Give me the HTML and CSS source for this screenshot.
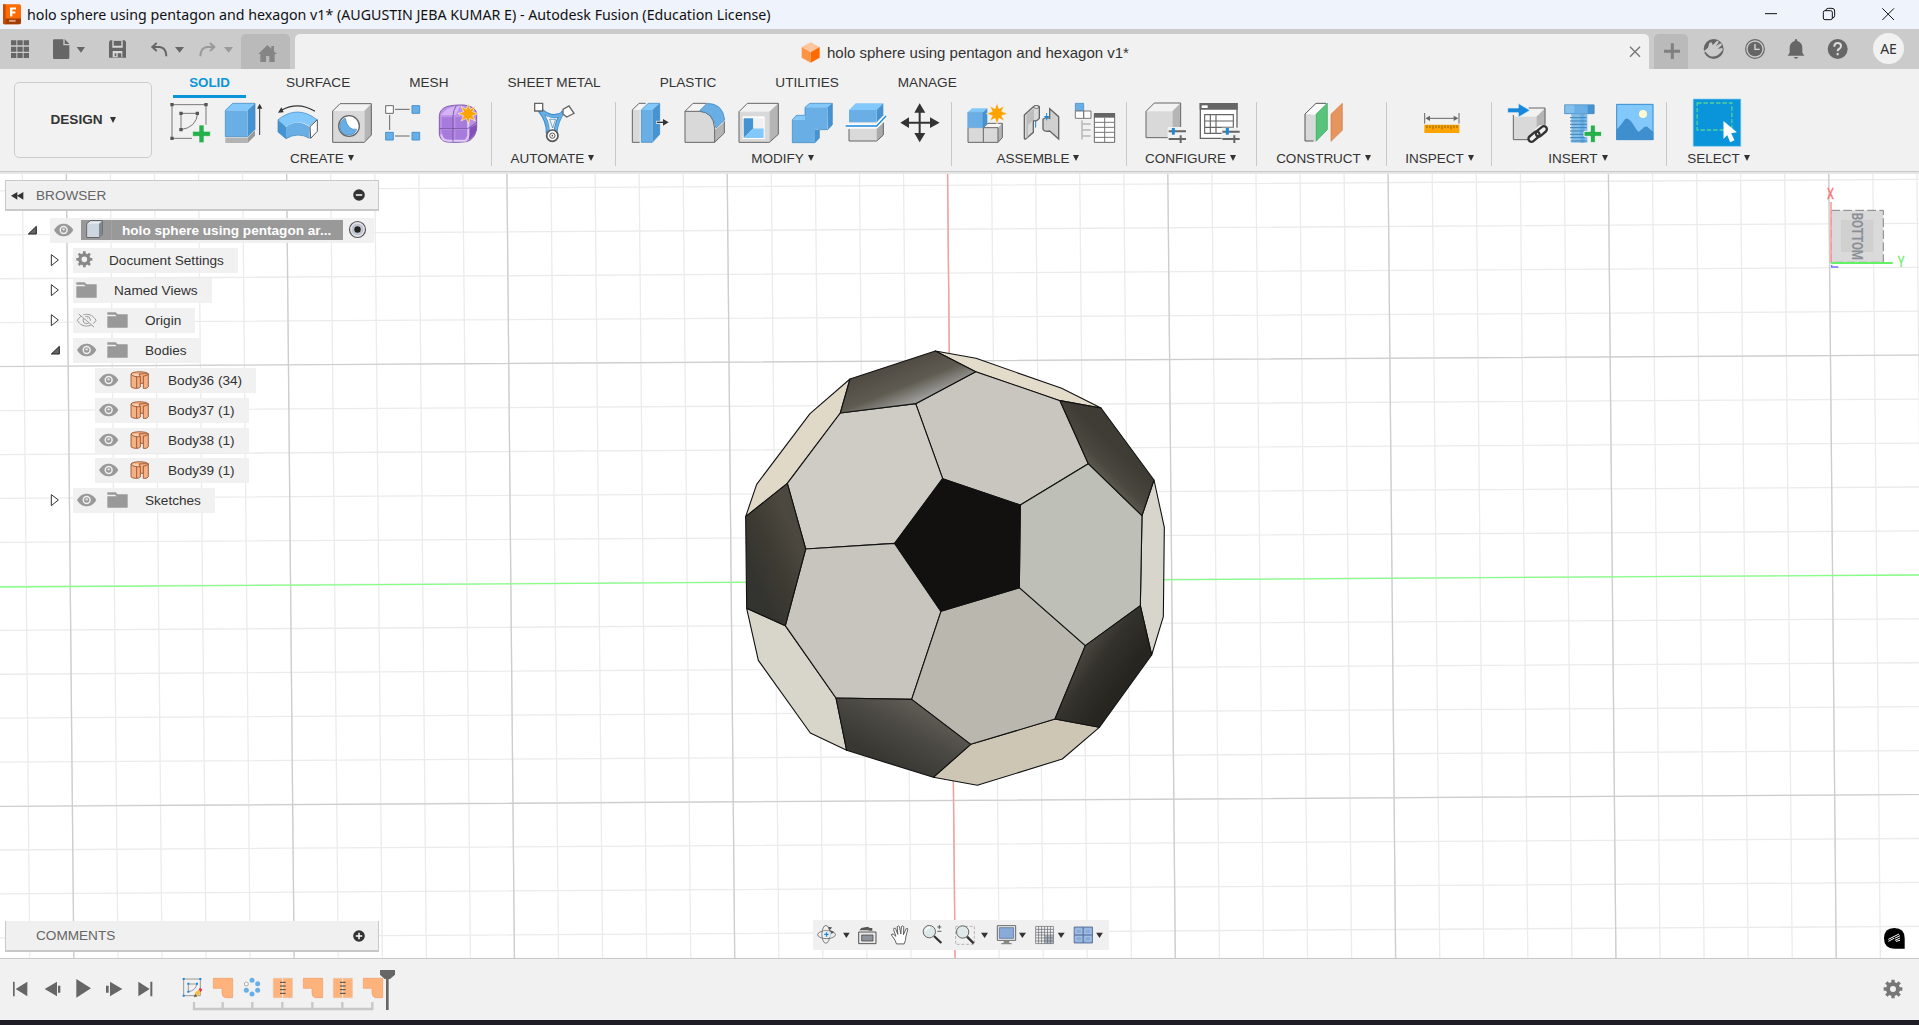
FILE: index.html
```html
<!DOCTYPE html>
<html lang="en">
<head>
<meta charset="utf-8">
<title>holo sphere using pentagon and hexagon v1* - Autodesk Fusion</title>
<link rel="stylesheet" href="styles.css">
</head>
<body>
<svg class="defs" width="0" height="0" aria-hidden="true">
  <symbol id="eye" viewBox="0 0 93 60"><path d="M12 30C22 13 34 11 41 11s20 3 29 19C61 46 49 49 41 49S21 46 12 30z" fill="#999"/><circle cx="41" cy="30" r="12.500" fill="#f0f0f0"/><circle cx="41" cy="30" r="8" fill="#999"/><circle cx="41" cy="28" r="3.500" fill="#e4e4e4"/></symbol>
  <symbol id="eye-off" viewBox="0 0 93 60"><g fill="none" stroke="#999" stroke-width="3"><path d="M13 31C22 17 32 13 41 13s20 4 28 18C60 45 50 48 41 48S21 45 13 31z"/><circle cx="41" cy="30" r="11"/><path d="M36 30a5 5 0 0 1 9-3"/><path d="M19 10L65 50" stroke="#f0f0f0" stroke-width="8"/><path d="M17 12L63 51"/></g></symbol>
  <symbol id="folder" viewBox="0 0 123 60"><path d="M10 7h25l6 6h30v40H10V19h28l-5-5H10z" fill="#999"/></symbol>
  <symbol id="body" viewBox="0 0 126 60"><g stroke="#8f4a26" stroke-width="2.500" stroke-linejoin="round"><path d="M15 12c2-9 50-9 52 0v38c-3 5-10 6-15 5V40h-9v11c-3 3-7 4-10 4-8 0-15-1-18-5z" fill="#f5b083"/><path d="M15 12c6 8 16 9 28 8l-4-8c14-1 20-2 28 0" fill="#fbd0b0"/><path d="M43 20v20M52 18v22M52 18c6 0 12-2 15-6M32 20v34" fill="none"/></g></symbol>
  <symbol id="closed" viewBox="0 0 30 60"><path d="M4 14v33L25 30z" fill="#fff" stroke="#333" stroke-width="3"/></symbol>
  <symbol id="open" viewBox="0 0 30 60"><path d="M4 42L28 19v23z" fill="#666" stroke="#222" stroke-width="3"/></symbol>
</svg>

<header class="titlebar">
  <svg class="app-logo" width="18" height="21" viewBox="9 12 54 62"><rect x="9" y="12" width="54" height="60" rx="5" fill="#ff6b00"/><path d="M9 55h54v12q0 5-5 5H14q-5 0-5-5z" fill="#a33d05"/><path d="M9 12h8v60h-3q-5 0-5-5z" fill="#c94f00"/><path d="M30 22h18v6H37v6h9v6h-9v9h-7z" fill="#fff"/><path d="M27 59h20v6H27z" fill="#e9b795" opacity=".8"/></svg>
  <span class="window-title">holo sphere using pentagon and hexagon v1* (AUGUSTIN JEBA KUMAR E) - Autodesk Fusion (Education License)</span>
  <svg class="win-buttons" width="159" height="29" viewBox="1080 0 477 87"><g fill="none" stroke="#111" stroke-width="3"><path d="M1095 41h36"/><rect x="1270" y="32" width="27" height="27" rx="5"/><path d="M1277 32q1-7 8-7h11q8 0 8 8v13q0 7-7 9"/><path d="M1447 25l35 35M1482 25l-35 35"/></g></svg>
</header>

<nav class="tabbar">
  <div class="quick">
    <svg width="40" height="40" viewBox="0 87 120 120" fill="#666"><path d="M33 121h16v15H33zM52 121h16v15H52zM71 121h16v15H71zM33 140h16v15H33zM52 140h16v15H52zM71 140h16v15H71zM33 159h16v15H33zM52 159h16v15H52zM71 159h16v15H71z"/></svg>
    <svg width="60" height="40" viewBox="120 87 180 120" fill="#666"><path d="M163 118h27v18h18v37q0 4-4 4h-41q-4 0-4-4v-51q0-4 4-4zM194 117l14 15h-14zM230 141h25l-12 17z"/></svg>
    <svg width="40" height="40" viewBox="300 87 120 120"><path d="M331 121h43l4 4v48H327v-48z" fill="#666"/><path d="M337 121h31v22h-31zM338 153h29v19h-29z" fill="#d8d8d8"/><path d="M341 123h23v14h-23zM344 160h5v9h-5zM353 160h11v12h-11z" fill="#666"/></svg>
    <svg width="50" height="40" viewBox="420 87 150 120"><path d="M470 129l-13 12 13 12M458 141h21q20 3 20 28" fill="none" stroke="#666" stroke-width="6"/><path d="M525 141h27l-13 17z" fill="#666"/></svg>
    <svg width="51" height="40" viewBox="570 87 153 120"><path d="M630 129l13 12-13 12M642 141h-21q-20 3-20 28" fill="none" stroke="#999" stroke-width="6"/><path d="M672 141h27l-13 17z" fill="#999"/></svg>
  </div>
  <div class="home-tab"><svg width="49" height="35" viewBox="723 102 147 105" fill="#858585"><path d="M775 162l27-27 12 11v-8h8v16l9 8h-7v24h-43v-24zM798 186h10v-18h-10z" fill-rule="evenodd"/></svg></div>
  <div class="doc-tab">
    <svg class="doc-cube" width="20" height="22" viewBox="64 127 60 66"><path d="M66 142l27-14 27 14-27 16z" fill="#ffc59d"/><path d="M66 142l27 16v31l-27-15z" fill="#ff9345"/><path d="M120 142l-27 16v31l27-15z" fill="#ff6a00"/></svg>
    <span class="doc-name">holo sphere using pentagon and hexagon v1*</span>
    <svg class="tab-close" width="16" height="16" viewBox="681 131 48 48"><path d="M690 139l30 30M720 139l-30 30" stroke="#777" stroke-width="4"/></svg>
  </div>
  <div class="new-tab"><svg width="34" height="35" viewBox="762 102 102 105"><path d="M792 154h48M817 130v47" stroke="#808080" stroke-width="9"/></svg></div>
  <svg class="status-icons" width="164" height="40" viewBox="870 87 492 120"><circle cx="941" cy="147" r="30" fill="#666"/><path d="M915 151l9-8 4-14q7-6 9 2l1 5 12-13q5-2 6 3l-8 13 13-9q6 0 4 6l-12 11 13-3q5 3 1 7-8 14-22 18-14 3-20-5-6-2-10-13z" fill="#cbcbcb"/><path d="M908 158l10-6M958 175l8 10" stroke="#cbcbcb" stroke-width="4"/><g fill="none" stroke="#666"><circle cx="1065" cy="147" r="28" stroke-width="3.500"/></g><circle cx="1065" cy="147" r="22" fill="#666"/><path d="M1065 132v16h14" fill="none" stroke="#ddd" stroke-width="4"/><path d="M1188 117q4 0 4 6 15 4 15 22v13l6 9h-50l6-9v-13q0-18 15-22 0-6 4-6zM1181 171h14q-7 10-14 0z" fill="#666"/><circle cx="1313" cy="147" r="30" fill="#666"/><path d="M1303 140q0-11 10-11t10 9q0 6-6 9-4 2-4 7M1313 159v7" fill="none" stroke="#ddd" stroke-width="6"/></svg>
  <span class="avatar">AE</span>
</nav>

<section class="ribbon">
  <button class="workspace">DESIGN<i class="caret"></i></button>
  <div class="tools">
    <div class="ribbon-tabs"><span class="active">SOLID</span><span>SURFACE</span><span>MESH</span><span>SHEET METAL</span><span>PLASTIC</span><span>UTILITIES</span><span>MANAGE</span></div>
    <div class="groups">
      <div class="group create">
        <div class="icons">
          <svg viewBox="483 300 162 132"><g fill="none" stroke="#777" stroke-width="3"><path d="M519 314h102v60M519 314v101h60M546 388v-48h50q-4 42-50 49"/></g><path d="M514 309h10v10h-10zM616 309h10v10h-10zM514 410h10v10h-10zM541 335h10v10h-10zM590 335h10v10h-10zM541 384h10v10h-10z" fill="#555"/><path d="M600 375h15v19h19v15h-19v19h-15v-19h-19v-15h19z" fill="#24b14b" stroke="#f1f1f1" stroke-width="2"/></svg>
          <svg viewBox="645 300 162 132"><path d="M679 413h67v16h-67z" fill="#b3b3b3"/><path d="M746 413l22-22v16l-22 22z" fill="#999"/><path d="M679 331l22-21h67l-22 21z" fill="#82c8fb"/><path d="M746 331l22-21v78l-22 22z" fill="#4593d0"/><path d="M679 331h67v79h-67z" fill="#69afe5"/><path d="M679 331l22-21h67v78l-22 22h-67z" fill="none" stroke="#3a83bb" stroke-width="2"/><path d="M782 405v-80" stroke="#333" stroke-width="3"/><path d="M782 311l8 15h-16z" fill="#333"/></svg>
          <svg viewBox="807 300 162 132"><path d="M848 330q50-27 100 4" fill="none" stroke="#333" stroke-width="3.500"/><path d="M837 338l10-16 7 15z" fill="#333"/><path d="M837 359q58-46 117 0l-22 20q-35-25-73 2z" fill="#82c8fb"/><path d="M837 359l24 22v35l-24-20z" fill="#4593d0"/><path d="M861 381q35-27 71 0v34q-36-20-71 1z" fill="#69afe5"/><path d="M837 359q58-46 117 0M837 359v37l24 20q35-21 71-1" fill="none" stroke="#3a83bb" stroke-width="2"/><path d="M933 380l22-21v35l-20 21z" fill="#fff" stroke="#555" stroke-width="3"/></svg>
          <svg viewBox="969 300 162 132"><path d="M1001 333l22-22h94l-21 22z" fill="#f2f2f2"/><path d="M1096 333l21-22v94l-21 22z" fill="#b5b5b5"/><path d="M1001 333h95v94h-95z" fill="#d9d9d9"/><path d="M1001 333l22-22h94v94l-21 22h-95z" fill="none" stroke="#666" stroke-width="3"/><circle cx="1050" cy="378" r="31" fill="#fff" stroke="#666" stroke-width="4"/><path d="M1039 355a26 26 0 1 0 34 33q-28 3-34-33z" fill="#69afe5" stroke="#3a83bb" stroke-width="2"/></svg>
          <svg viewBox="1131 300 162 132"><path d="M1172 345v45M1188 328h44M1188 408h44" stroke="#666" stroke-width="3"/><path d="M1160 317h23v23h-23z" fill="#fff" stroke="#666" stroke-width="3"/><path d="M1239 317h23v23h-23zM1239 397h23v23h-23zM1160 397h23v23h-23z" fill="#69afe5" stroke="#4593d0" stroke-width="3"/></svg>
          <svg viewBox="1293 300 162 132"><path d="M1321 347q2-20 22-27 20-6 53-5 34 5 37 25v44q-4 33-30 41-30 4-60 1-20-4-22-24z" fill="#bb91e6" stroke="#6d4a9d" stroke-width="2.500"/><path d="M1324 346q20-28 60-29l-14 28-24 1z" fill="#d5b4f5"/><path d="M1329 352h34v32h-34zM1369 352h36v32h-36zM1329 390h34v29q-34 3-34-16zM1369 390h36v31h-36z" fill="#a77bdc"/><path d="M1410 385l23-12v18q-10 22-23 28z" fill="#8452b6"/><path d="M1327 403q0 18 20 19h53l8-14v-56" fill="none" stroke="#dfc8f6" stroke-width="6"/><path d="M1322 386h84l26-18M1362 425v-75q0-20 10-33" fill="none" stroke="#6d4a9d" stroke-width="2.500"/><path d="M1408 310l5 18 16-9-8 16 17 6-17 6 8 16-16-8-5 17-6-17-16 8 8-16-17-6 17-6-8-16 16 9z" fill="#fba400" stroke="#f1f1f1" stroke-width="2"/></svg>
        </div>
        <div class="label">CREATE<i class="caret"></i></div>
      </div>
      <div class="group automate">
        <div class="icons">
          <svg viewBox="143 105 162 132"><path d="M180 135q28 35 25 70M252 140q-20 25-24 65M184 134q35 34 72 8" fill="none" stroke="#3f8dca" stroke-width="12"/><path d="M182 136q26 33 24 70M254 140q-22 25-26 65M186 136q34 32 66 8" fill="none" stroke="#69afe5" stroke-width="7"/><path d="M211 163h18l-9 26z" fill="#f1f1f1" stroke="#3a83bb" stroke-width="2"/><path d="M166 115h24v23h-24z" fill="#fff" stroke="#666" stroke-width="4"/><path d="M251 133l18-10 15 22-22 11-11-9z" fill="#fff" stroke="#666" stroke-width="4"/><circle cx="219" cy="212" r="17" fill="#fff" stroke="#555" stroke-width="5"/><circle cx="219" cy="212" r="8" fill="#fff" stroke="#555" stroke-width="3"/><circle cx="219" cy="212" r="2.500" fill="#555"/></svg>
        </div>
        <div class="label">AUTOMATE<i class="caret"></i></div>
      </div>
      <div class="group modify">
        <div class="icons">
          <svg viewBox="427 105 162 132"><path d="M458 135l20-20h21l-19 20v97h-22z" fill="#d9d9d9"/><path d="M458 135l20-20h21l-19 20z" fill="#f5f5f5"/><path d="M480 232h-22v-97l20-20h20" fill="none" stroke="#666" stroke-width="3"/><path d="M485 135l21-20h34l-22 20z" fill="#82c8fb"/><path d="M518 135l22-20v93l-22 24z" fill="#4593d0"/><path d="M485 135h33v97h-33z" fill="#69afe5"/><path d="M485 135l21-20h34v93l-22 24h-33z" fill="none" stroke="#3a83bb" stroke-width="2"/><path d="M529 172h26" stroke="#f1f1f1" stroke-width="9"/><path d="M531 172h24" stroke="#333" stroke-width="4"/><path d="M550 162l17 10-17 10z" fill="#333"/></svg>
          <svg viewBox="589 105 162 132"><path d="M616 139h43q42 2 46 50v43h-89z" fill="#d9d9d9"/><path d="M616 139l24-24h38l-18 24z" fill="#f5f5f5"/><path d="M705 195l29-24v33l-29 28z" fill="#b5b5b5"/><path d="M680 115h-40l-24 24v93h89l29-28v-35M616 139h43q42 2 46 50v43" fill="none" stroke="#666" stroke-width="3"/><path d="M660 137l22-22q48 0 53 50l-26 24q-6-45-49-52z" fill="#69afe5" stroke="#3a83bb" stroke-width="2"/></svg>
          <svg viewBox="751 105 162 132"><path d="M778 140l25-25h93l-27 25z" fill="#f2f2f2"/><path d="M869 140l27-25v93l-27 24z" fill="#b5b5b5"/><path d="M778 140h91v92h-91z" fill="#d9d9d9"/><path d="M778 140l25-25h93v93l-27 24h-91z" fill="none" stroke="#666" stroke-width="3"/><path d="M789 154h66v68h-66z" fill="#fff"/><path d="M792 160h29v30l-29 29z" fill="#4593d0"/><path d="M821 190h31v29h-60z" fill="#82c8fb"/><path d="M821 160h31v30h-31z" fill="#f1f1f1"/></svg>
          <svg viewBox="913 105 162 132"><path d="M938 164l12-13h28v13zM976 127l14-12h68l-15 12z" fill="#82c8fb"/><path d="M1043 127l15-12v64l-14 15z" fill="#4593d0"/><path d="M1006 194h13v25l-13 14z" fill="#4593d0"/><path d="M938 164h38v-37h67v67h-37v39h-68z" fill="#69afe5"/><path d="M938 164l12-13h26v-24l14-12h68v64l-14 15h-25v25l-13 14h-68z" fill="none" stroke="#3a83bb" stroke-width="2"/></svg>
          <svg viewBox="1075 105 162 132"><path d="M1108 135l20-20h83l-20 20z" fill="#82c8fb"/><path d="M1191 135l20-20v36l-20 21z" fill="#4593d0"/><path d="M1108 135h83v37h-83z" fill="#69afe5"/><path d="M1108 192h83v36h-83z" fill="#d9d9d9"/><path d="M1191 192l20-19v37l-20 18z" fill="#aaa"/><path d="M1108 192v36h83l20-18v-37" fill="none" stroke="#666" stroke-width="3"/><path d="M1098 183h93l28-30" fill="none" stroke="#fff" stroke-width="10"/><path d="M1098 183h93l28-30" fill="none" stroke="#1789dc" stroke-width="4"/></svg>
          <svg viewBox="1237 105 162 132"><path d="M1262 173l26-16v13h29v-27h-13l16-28 17 28h-14v27h28v-13l29 16-29 16v-13h-28v28h14l-17 28-16-28h13v-28h-29v13z" fill="#333"/></svg>
        </div>
        <div class="label">MODIFY<i class="caret"></i></div>
      </div>
      <div class="group assemble">
        <div class="icons">
          <svg viewBox="57 105 162 132"><path d="M84 188h46v44H84zM130 188h44v44h-44z" fill="#d9d9d9"/><path d="M130 188l14-13h43l-13 13z" fill="#f5f5f5"/><path d="M174 188l13-13v43l-13 14z" fill="#b5b5b5"/><path d="M84 188v44h90l13-14v-43h-43l-14 13h44M130 188v44M174 188v44" fill="none" stroke="#666" stroke-width="3"/><path d="M83 142l13-12h46l-13 12z" fill="#82c8fb"/><path d="M129 142l13-12v46l-13 12z" fill="#4593d0"/><path d="M83 142h46v46H83z" fill="#69afe5" stroke="#3a83bb" stroke-width="1"/><path d="M171 113l6 18 16-8-8 16 18 7-18 6 8 16-16-8-6 18-6-18-16 8 8-16-18-6 18-7-8-16 16 8z" fill="#fba400" stroke="#f1f1f1" stroke-width="2"/></svg>
          <svg viewBox="219 105 162 132"><path d="M253 150l27-25q8-6 18 0v35q-10 12-18 6v36l-23 20q-4 2-4-4z" fill="#d9d9d9" stroke="#666" stroke-width="4"/><path d="M259 150l23-20v34l-18 16v36l-5 4z" fill="#bdbdbd"/><path d="M329 131l27 24v67l-27-24q-16 4-20-5v-30q8-8 20-3z" fill="#d0d0d0" stroke="#666" stroke-width="4"/><ellipse cx="289" cy="126" rx="8" ry="4" fill="#fff" stroke="#666" stroke-width="3"/><path d="M287 168v20M320 144v22" stroke="#1789dc" stroke-width="3"/><path d="M312 153l8 10 8-10z" fill="#1789dc"/></svg>
          <svg viewBox="381 105 162 132"><path d="M406 115h25v23h-25z" fill="#69afe5" stroke="#3a83bb" stroke-width="2"/><path d="M406 138h25v22h-25zM431 138h22v22h-22z" fill="#fff" stroke="#777" stroke-width="3"/><path d="M426 166v57M428 177h24M428 195h24M428 213h24" fill="none" stroke="#999" stroke-width="3"/><path d="M463 146h61v86h-61z" fill="#fff" stroke="#666" stroke-width="3"/><path d="M462 144h63v14h-63z" fill="#666"/><path d="M463 172h61M463 187h61M463 202h61M463 217h61M494 158v74" stroke="#777" stroke-width="3"/></svg>
        </div>
        <div class="label">ASSEMBLE<i class="caret"></i></div>
      </div>
      <div class="group configure">
        <div class="icons">
          <svg viewBox="595 105 162 132"><path d="M619 139l25-25h79l-25 25z" fill="#f2f2f2"/><path d="M698 139l25-25v80l-25 23z" fill="#b5b5b5"/><path d="M619 139h79v79h-79z" fill="#d9d9d9"/><path d="M690 218h-71v-79l25-25h79v74" fill="none" stroke="#666" stroke-width="3"/><path d="M684 186h60v52h-60z" fill="#f1f1f1"/><path d="M687 199h52M687 222h52M723 211v23" stroke="#666" stroke-width="6"/><path d="M701 189v20" stroke="#1789dc" stroke-width="9"/></svg>
          <svg viewBox="757 105 162 132"><path d="M782 116h110v104H782z" fill="#fff" stroke="#666" stroke-width="4"/><path d="M780 114h114v20H780z" fill="#666"/><path d="M786 121h18v8h-18z" fill="#fff"/><path d="M795 149h86v56h-86zM795 168h86M795 187h86M812 149v56M829 149v56" fill="none" stroke="#666" stroke-width="3.500"/><path d="M846 188h56v50h-56z" fill="#f1f1f1"/><path d="M848 200h52M848 222h52M884 211v23" stroke="#666" stroke-width="6"/><path d="M863 189v20" stroke="#1789dc" stroke-width="9"/></svg>
        </div>
        <div class="label">CONFIGURE<i class="caret"></i></div>
      </div>
      <div class="group construct">
        <div class="icons">
          <svg viewBox="1066 105 162 132"><path d="M1096 147h30v80h-30z" fill="#d9d9d9"/><path d="M1096 147l33-32h33l-34 34z" fill="#fff"/><path d="M1122 228h-26v-81l33-32h30" fill="none" stroke="#555" stroke-width="3"/><path d="M1129 148l34-34v80l-34 35z" fill="#58c47b" stroke="#36a35c" stroke-width="2"/><path d="M1174 148l34-33v81l-34 33z" fill="#e6955f" stroke="#cf7d48" stroke-width="2"/></svg>
        </div>
        <div class="label">CONSTRUCT<i class="caret"></i></div>
      </div>
      <div class="group inspect">
        <div class="icons">
          <svg viewBox="38 300 162 132"><path d="M73 339v32M176 339v32M80 355h90" stroke="#666" stroke-width="3"/><path d="M75 355l14-8v16zM174 355l-14-8v16z" fill="#666"/><path d="M72 374h105v25H72z" fill="#fba400"/><path d="M80 376v8M89 376v8M98 376v12M107 376v8M116 376v8M125 376v12M134 376v8M143 376v8M152 376v12M161 376v8M170 376v8" stroke="#7a5a1c" stroke-width="2.500"/></svg>
        </div>
        <div class="label">INSPECT<i class="caret"></i></div>
      </div>
      <div class="group insert">
        <div class="icons">
          <svg viewBox="296 300 162 132"><path d="M339 350l30-26h66l-27 26z" fill="#f2f2f2"/><path d="M408 350l27-26v70l-27 24z" fill="#b5b5b5"/><path d="M339 350h69v69h-69z" fill="#d9d9d9"/><path d="M339 345v74h48M385 324h49v50" fill="none" stroke="#666" stroke-width="3"/><path d="M322 324h32v-14l35 21-35 21v-14h-32z" fill="#1789dc" stroke="#f1f1f1" stroke-width="2"/><g fill="none" stroke-linecap="round"><path d="M401 411l22-22M401 414l16-16" stroke="#f1f1f1" stroke-width="28"/><rect x="-19" y="-9" width="38" height="18" rx="9" transform="translate(401 410) rotate(-40)" stroke="#333" stroke-width="7"/><rect x="-19" y="-9" width="38" height="18" rx="9" transform="translate(423 394) rotate(-40)" stroke="#333" stroke-width="7"/></g></svg>
          <svg viewBox="458 300 162 132"><path d="M513 342h48v86h-48z" fill="#84bee8"/><path d="M540 342h12v86h-12z" fill="#69afe5"/><path d="M509 353h50M509 363h50M509 373h50M509 383h50M509 393h45M509 403h42M509 413h45M511 423h48" stroke="#3a83bb" stroke-width="3"/><path d="M493 315h88v26h-88z" fill="#69afe5"/><path d="M493 315h29v26h-29z" fill="#84c0ee"/><path d="M562 315h20v26h-20z" fill="#4593d0"/><path d="M493 314h88v27h-88z" fill="none" stroke="#3a83bb" stroke-width="2"/><path d="M570 375h15v19h19v15h-19v19h-15v-19h-19v-15h19z" fill="#24b14b" stroke="#f1f1f1" stroke-width="3"/></svg>
          <svg viewBox="620 300 162 132"><path d="M648 312h111v108H648z" fill="#82c8fb"/><path d="M648 390q15-15 22-27 6-9 11-7 9 0 26 31l8 9 17-15q7-4 12 2l15 13v24H648z" fill="#3f8fce"/><path d="M649 313h109v106H649z" fill="none" stroke="#3f8fce" stroke-width="3"/><circle cx="728" cy="342" r="12" fill="#fffbd0"/></svg>
        </div>
        <div class="label">INSERT<i class="caret"></i></div>
      </div>
      <div class="group select">
        <div class="icons">
          <svg viewBox="871.500 300 162 132"><path d="M881 297h143v142H881z" fill="#0a95da" stroke="#8ecbed" stroke-width="2"/><path d="M893 309h104v81H893z" fill="none" stroke="#57cf9a" stroke-width="4" stroke-dasharray="13 6"/><path d="M972 363l40 34-17 3 10 21-13 6-9-22-11 12z" fill="#fff"/></svg>
        </div>
        <div class="label">SELECT<i class="caret"></i></div>
      </div>
    </div>
  </div>
</section>

<main class="viewport">
  <svg class="scene" viewBox="0 174 1919 784">
    <defs>
      <linearGradient id="d1" gradientUnits="userSpaceOnUse" x1="450" y1="80" x2="500" y2="205"><stop offset="0" stop-color="#4d4942"/><stop offset=".6" stop-color="#5f5b51"/><stop offset="1" stop-color="#9a9a97"/></linearGradient>
      <linearGradient id="d2" gradientUnits="userSpaceOnUse" x1="1080" y1="420" x2="1170" y2="330"><stop offset="0" stop-color="#6c695e"/><stop offset=".5" stop-color="#4a473f"/><stop offset="1" stop-color="#3f3c35"/></linearGradient>
      <linearGradient id="d3" gradientUnits="userSpaceOnUse" x1="1060" y1="920" x2="1190" y2="1010"><stop offset="0" stop-color="#4a4841"/><stop offset=".4" stop-color="#34322c"/><stop offset="1" stop-color="#272520"/></linearGradient>
      <linearGradient id="d4" gradientUnits="userSpaceOnUse" x1="530" y1="1080" x2="440" y2="1250"><stop offset="0" stop-color="#5f5b55"/><stop offset=".4" stop-color="#4c4a45"/><stop offset="1" stop-color="#393732"/></linearGradient>
      <linearGradient id="d5" gradientUnits="userSpaceOnUse" x1="215" y1="630" x2="60" y2="700"><stop offset="0" stop-color="#4c483f"/><stop offset=".5" stop-color="#3e3b33"/><stop offset="1" stop-color="#33332f"/></linearGradient>
    </defs>
    <!-- ground grid: each family of lines is one wide dashed stroke, skewed to the camera roll -->
    <g fill="none">
      <path d="M21.700 566H1960" stroke="#ebebeb" stroke-width="900" stroke-dasharray="1.300 42.760" transform="translate(-1.700 0) skewX(.548)"/>
      <path d="M960 134.800V1000" stroke="#ebebeb" stroke-width="2000" stroke-dasharray="1.300 42.640" transform="translate(0 11.500) skewY(-.343)"/>
      <path d="M65.700 566H1960" stroke="#cdcdcd" stroke-width="900" stroke-dasharray="1.300 219" transform="translate(-1.700 0) skewX(.548)"/>
      <path d="M0 366.500L1919 355M0 806.500L1919 794.500" stroke="#cdcdcd" stroke-width="1.200"/>
      <path d="M947.600 174L955.100 958" stroke="#ff9a9a" stroke-width="1.300"/>
      <path d="M0 587L1919 575" stroke="#85ff85" stroke-width="1.300"/>
    </g>
    <g transform="translate(730 340) scale(.33333)" stroke="#111" stroke-width="3.300" stroke-linejoin="round">
      <path d="M616 33L738 55 995 145 1113 204 990 182 737 95z" fill="#e4dccb"/>
      <path d="M1272 420L1303 562 1300 830 1265 945 1231 797 1236 527z" fill="#d8d6cc"/>
      <path d="M1108 1162L997 1257 742 1336 610 1312 722 1213 975 1137z" fill="#cdc6b5"/>
      <path d="M350 1231L241 1179 85 961 50 805 166 857 318 1074z" fill="#d8d5ca"/>
      <path d="M47 530L80 433 240 221 360 117 331 219 172 430z" fill="#e0d9c8"/>
      <path d="M557 191L737 95 990 182 1075 371 871 495 638 416z" fill="#c9c6bf"/>
      <path d="M331 219L557 191 638 416 494 610 227 627 172 430z" fill="#cfccc5"/>
      <path d="M227 627L494 610 633 814 545 1078 318 1074 166 857z" fill="#c8c5be"/>
      <path d="M633 814L868 743 1066 917 975 1137 722 1213 545 1078z" fill="#bab7af"/>
      <path d="M871 495L1075 371 1236 527 1231 797 1066 917 868 743z" fill="#bebfb7"/>
      <path d="M360 117L616 33 737 95 557 191 331 219z" fill="url(#d1)"/>
      <path d="M990 182L1113 204 1272 420 1236 527 1075 371z" fill="url(#d2)"/>
      <path d="M1231 797L1265 945 1108 1162 975 1137 1066 917z" fill="url(#d3)"/>
      <path d="M318 1074L545 1078 722 1213 610 1312 350 1231z" fill="url(#d4)"/>
      <path d="M47 530L172 430 227 627 166 857 50 805z" fill="url(#d5)"/>
      <path d="M638 416L871 495 868 743 633 814 494 610z" fill="#12110f"/>
    </g>
    <g transform="translate(1780 170) scale(.33333)">
      <path d="M154 121h156v156H154z" fill="#d6d6d6" fill-opacity=".9"/><path d="M183 149h97v97h-97z" fill="#ccc" opacity=".7"/>
      <path d="M154 121h156v156H154z" fill="none" stroke="#858585" stroke-width="3" stroke-dasharray="26 10"/>
      <path d="M153 96v183" stroke="#ff9c9c" stroke-width="5"/><path d="M153 279h185" stroke="#63f263" stroke-width="6"/><path d="M155 285v6h20" fill="none" stroke="#7474ee" stroke-width="4"/>
      <text class="cube-face" transform="translate(216 128) rotate(90)" textLength="142" lengthAdjust="spacingAndGlyphs">BOTTOM</text>
      <text class="axis-x" x="141" y="88" textLength="21" lengthAdjust="spacingAndGlyphs">X</text><text class="axis-y" x="353" y="292" textLength="20" lengthAdjust="spacingAndGlyphs">Y</text>
    </g>
  </svg>

  <aside class="browser">
    <div class="panel-head">
      <svg width="30" height="28" viewBox="20 18 90 84"><path d="M54 51v23L35 62.500zM72 51v23L53 62.500z" fill="#333"/></svg>
      <span>BROWSER</span>
      <svg class="head-dot" width="14" height="14" viewBox="0 0 14 14"><circle cx="7" cy="7" r="5.800" fill="#333"/><path d="M3.800 7h6.400" stroke="#fff" stroke-width="1.500"/></svg>
    </div>
    <ul class="tree">
      <li class="root"><svg class="twisty"><use href="#open"/></svg><span class="pill"><svg class="i-eye"><use href="#eye"/></svg><span class="chosen"><svg width="31" height="20" viewBox="244 135 93 60"><path d="M262 145l10-8h36v41l-10 9h-36z" fill="#e8ecf2" stroke="#444" stroke-width="2.500"/><path d="M298 146l10-8v40l-10 9z" fill="#7f8791"/><path d="M263 146h35v40h-35z" fill="#cdd5df"/><path d="M337 135v60" stroke="#aaa" stroke-width="3"/></svg><b>holo sphere using pentagon ar...</b></span><svg class="radio" width="19" height="20" viewBox="0 0 19 20"><circle cx="9.500" cy="9.500" r="8" fill="#e5e8ee" stroke="#555" stroke-width="1.200"/><circle cx="9.500" cy="9.500" r="6" fill="#bfc5cf"/><circle cx="9.500" cy="9.500" r="3.200" fill="#222"/></svg></span></li>
      <li class="l1"><svg class="twisty"><use href="#closed"/></svg><span class="pill"><svg width="36" height="20" viewBox="0 0 108 60"><g transform="translate(34 28)"><circle r="13.500" fill="none" stroke="#888" stroke-width="10"/><path d="M0-24v10M0 24V14M-24 0h10M24 0H14M-17-17l7 7M17 17l-7-7M-17 17l7-7M17-17l-7 7" stroke="#888" stroke-width="8"/></g></svg>Document Settings</span></li>
      <li class="l1"><svg class="twisty"><use href="#closed"/></svg><span class="pill"><svg class="i-folder"><use href="#folder"/></svg>Named Views</span></li>
      <li class="l1"><svg class="twisty"><use href="#closed"/></svg><span class="pill"><svg class="i-eye"><use href="#eye-off"/></svg><svg class="i-folder"><use href="#folder"/></svg>Origin</span></li>
      <li class="l1"><svg class="twisty"><use href="#open"/></svg><span class="pill"><svg class="i-eye"><use href="#eye"/></svg><svg class="i-folder"><use href="#folder"/></svg>Bodies</span></li>
      <li class="l2"><span class="pill"><svg class="i-eye"><use href="#eye"/></svg><svg class="i-body"><use href="#body"/></svg>Body36 (34)</span></li>
      <li class="l2"><span class="pill"><svg class="i-eye"><use href="#eye"/></svg><svg class="i-body"><use href="#body"/></svg>Body37 (1)</span></li>
      <li class="l2"><span class="pill"><svg class="i-eye"><use href="#eye"/></svg><svg class="i-body"><use href="#body"/></svg>Body38 (1)</span></li>
      <li class="l2"><span class="pill"><svg class="i-eye"><use href="#eye"/></svg><svg class="i-body"><use href="#body"/></svg>Body39 (1)</span></li>
      <li class="l1"><svg class="twisty"><use href="#closed"/></svg><span class="pill"><svg class="i-eye"><use href="#eye"/></svg><svg class="i-folder"><use href="#folder"/></svg>Sketches</span></li>
    </ul>
  </aside>

  <aside class="comments panel-head"><span>COMMENTS</span><svg class="head-dot" width="14" height="14" viewBox="0 0 14 14"><circle cx="7" cy="7" r="5.800" fill="#333"/><path d="M3.800 7h6.400M7 3.800v6.400" stroke="#fff" stroke-width="1.500"/></svg></aside>

  <div class="navbar">
    <svg width="40" height="30" viewBox="39 30 121 90"><g fill="none" stroke="#666" stroke-width="2.500"><ellipse cx="80" cy="74" rx="27" ry="12"/><ellipse cx="78" cy="73" rx="12" ry="27"/></g><path d="M69 64h21v18H69z" fill="#f0f0f0"/><path d="M80 67v13M73 73h13" stroke="#1789dc" stroke-width="4"/><path d="M85 50l12 2-8 9zM90 60l13 6-8 6z" fill="#555"/><path d="M130 68h20l-10 16z" fill="#333"/></svg>
    <svg width="30" height="30" viewBox="160 30 90 90"><path d="M177 66h52v35h-52z" fill="#e8e8e8" stroke="#555" stroke-width="3"/><path d="M186 75h34v18h-34z" fill="#8f949c" stroke="#333" stroke-width="2"/><path d="M179 61l6-7 19-4 8 5-7 6z" fill="#555"/><path d="M205 62h13v-8h-8z" fill="#555"/></svg>
    <svg width="32" height="30" viewBox="248 30 97 90"><path d="M289 102q-3-11-12-22-6-6-2-8 5-1 12 7L280 58q0-6 6-3l7 18-2-23q3-5 7 0l4 22 2-23q5-4 7 1l-1 24 8-18q6-3 5 3l-6 22q1 9-5 21z" fill="#fff" stroke="#555" stroke-width="2.800"/></svg>
    <svg width="34" height="30" viewBox="347 30 100 90"><path d="M403 78l22 21" stroke="#333" stroke-width="7"/><circle cx="389" cy="65" r="18.500" fill="#dfe8e8" stroke="#666" stroke-width="3"/><path d="M378 62q3-9 12-10" stroke="#fff" stroke-width="5" fill="none"/><path d="M413 51h12M419 45v12M413 64h12" stroke="#444" stroke-width="2.500"/></svg>
    <svg width="42" height="30" viewBox="447 30 126 90"><path d="M467 49h56v54h-56z" fill="none" stroke="#999" stroke-width="2" stroke-dasharray="9 5"/><path d="M501 80l20 20" stroke="#333" stroke-width="7"/><circle cx="488" cy="66" r="18.500" fill="#dfe9e8" stroke="#666" stroke-width="3"/><path d="M543 68h21l-10 16z" fill="#333"/></svg>
    <svg width="39" height="30" viewBox="573 30 117 90"><path d="M592 47h55v44h-55z" fill="#eee" stroke="#666" stroke-width="3"/><path d="M598 53h43v32h-43z" fill="#88abd9" stroke="#4a648a" stroke-width="2"/><path d="M611 92h17v7h7v4h-31v-4h7z" fill="#888"/><path d="M657 68h21l-11 16z" fill="#333"/></svg>
    <svg width="39" height="30" viewBox="690 30 118 90"><path d="M707 49h54v52h-54z" fill="#eef0f4"/><path d="M735 76h26v25h-26z" fill="#aab3c0"/><path d="M707 49h54v52h-54zM716 49v52M725 49v52M734 49v52M743 49v52M752 49v52M707 58h54M707 67h54M707 75h54M707 84h54M707 93h54" fill="none" stroke="#666" stroke-width="2"/><path d="M774 68h21l-11 16z" fill="#333"/></svg>
    <svg width="40" height="30" viewBox="808 30 119 90"><path d="M823 51h55v48h-55z" fill="#88abd9" stroke="#52698f" stroke-width="2.500"/><path d="M828 57h18v14h-18zM855 57h18v14h-18zM828 79h18v14h-18zM855 79h18v14h-18z" fill="none" stroke="#bdd0ec" stroke-width="2"/><path d="M850 51v48M823 75h55" stroke="#52698f" stroke-width="2.500"/><path d="M889 68h20l-10 16z" fill="#333"/></svg>
  </div>
  <svg class="assistant" width="21" height="21" viewBox="252 84 63 63"><path d="M283 84q31 0 31 31v31h-31q-31 0-31-31t31-31z" fill="#000"/><path d="M265 118l32-16M265 124l17-9M284 115l16-8M285 121l15-7M288 124l12-3" stroke="#fff" stroke-width="3"/></svg>
</main>

<footer class="timeline">
  <svg width="31" height="61" viewBox="15 162 93 183" fill="#666"><path d="M39 230h5v44h-5zM82 230v44L47 252z"/></svg>
  <svg width="32" height="61" viewBox="108 162 96 183" fill="#666"><path d="M171 230v44l-37-22zM174 242h7v21h-7z"/></svg>
  <svg width="31" height="61" viewBox="204 162 93 183" fill="#666"><path d="M229 222v56l44-28z"/></svg>
  <svg width="31" height="61" viewBox="297 162 93 183" fill="#666"><path d="M330 230v44l37-22zM318 242h8v21h-8z"/></svg>
  <svg width="31" height="61" viewBox="390 162 93 183" fill="#666"><path d="M415 230v44l34-22zM451 230h6v44h-6z"/></svg>
  <svg class="track" width="240" height="61" viewBox="483 162 720 183">
    <path d="M582 291v21h535v-21M668 291v21M757 291v21M847 291v21M937 291v21M1027 291v21" fill="none" stroke="#c8c8c8" stroke-width="7"/>
    <path d="M551 222h50v50h-50zM565 260v-23h25q-2 20-25 23" fill="none" stroke="#999" stroke-width="3"/><path d="M548 219h6v6h-6zM598 219h6v6h-6zM548 269h6v6h-6zM562 233h6v6h-6zM588 233h6v6h-6zM562 257h6v6h-6z" fill="#1789dc"/><path d="M582 276l4-14 10-8 8 8-11 11z" fill="#f7bd48"/><path d="M582 277l3-10 7 7z" fill="#555"/><path d="M596 253l5-5 6 6-5 8z" fill="#e4334a"/>
    <g fill="#ffb37c" stroke="#ef9d66" stroke-width="2"><path id="fillet" d="M640 220h58v58h-22q-10-2-10-14v-14h-26z"/><use href="#fillet" x="270"/><use href="#fillet" x="450"/></g>
    <g fill="#69afe5"><circle cx="756" cy="226" r="7.500"/><circle cx="773" cy="236" r="7.500"/><circle cx="773" cy="256" r="7.500"/><circle cx="756" cy="267" r="7.500"/><circle cx="739" cy="256" r="7.500"/><circle cx="739" cy="237" r="6" fill="#fff" stroke="#aaa" stroke-width="3"/></g>
    <g id="thread"><path d="M820 220h57v58h-57z" fill="#ffb37c" stroke="#efbd98" stroke-width="2"/><path d="M848 220v58" stroke="#f1f1f1" stroke-width="3"/><path d="M840 232h17M840 243h17M840 254h17M840 265h17" stroke="#444" stroke-width="3"/></g><use href="#thread" x="180"/>
    <path d="M1140 195h45v14l-15 13h-4v93h-8v-93h-4l-14-13z" fill="#666"/>
  </svg>
  <svg class="settings" width="24" height="24" viewBox="-36 -36 72 72"><circle r="15" fill="none" stroke="#777" stroke-width="12"/><path d="M0-28v12M0 28V16M-28 0h12M28 0H16M-20-20l9 9M20 20l-9-9M-20 20l9-9M20-20l-9 9" stroke="#777" stroke-width="10"/></svg>
</footer>
<div class="taskbar-edge"></div>
</body>
</html>
```

FILE: styles.css
```css
* { box-sizing: border-box; }
body {
  margin: 0;
  height: 1025px;
  overflow: hidden;
  display: flex;
  flex-direction: column;
  background: #f1f1f1;
  color: #333;
  font: 13.33px "Liberation Sans", Arial, sans-serif;
}
svg { display: block; flex: none; }
.defs { position: absolute; }

.titlebar { flex: none; height: 29px; display: flex; align-items: center; padding-left: 3px; background: #eff3fb; }
.app-logo { margin-right: 6px; }
.window-title { font: 14.22px "Noto Sans", "Open Sans", sans-serif; color: #111; white-space: nowrap; width: 744px; }
.win-buttons { margin-left: auto; }

.tabbar { flex: none; height: 40px; display: flex; align-items: flex-end; background: #cbcbcb; }
.quick { display: flex; width: 241px; }
.home-tab, .new-tab { height: 35px; background: #bababa; border-radius: 5px 5px 0 0; }
.home-tab { width: 49px; margin-right: 5px; }
.doc-tab { width: 1354px; height: 35px; display: flex; align-items: center; padding-left: 506px; background: #f1f1f1; border-radius: 5px 5px 0 0; }
.doc-cube { margin-top: 2px; }
.doc-name { margin-left: 6px; padding-top: 2px; font-size: 15px; white-space: nowrap; }
.tab-close { margin-left: auto; margin-right: 6px; }
.new-tab { width: 34px; margin-left: 5px; }
.status-icons { margin-left: 2px; }
.avatar { width: 31px; height: 31px; margin: 0 0 5px 19px; border-radius: 50%; background: #f1f1f1; font: 14px/31px "Noto Sans", sans-serif; text-align: center; }

.ribbon { flex: none; height: 105px; display: flex; border-bottom: 2px solid #e6e6e6; background: linear-gradient(#c8c8c8, #c8c8c8) 0 102px / 100% 1px no-repeat #f1f1f1; }
.workspace { width: 138px; height: 76px; margin: 13px 0 0 14px; border: 1px solid #ccc; border-radius: 5px; background: #f2f2f2; color: #333; font: bold 13.6px "Liberation Sans", Arial, sans-serif; padding: 0 0 2px; }
.caret { display: inline-block; margin-left: 4px; border: 3.500px solid transparent; border-top: 6px solid #333; border-bottom: 0; vertical-align: 2px; }
.workspace .caret { margin-left: 7px; vertical-align: 1px; }
.tools { display: flex; flex-direction: column; }
.ribbon-tabs { display: flex; gap: 27px; height: 29px; padding-left: 21px; }
.ribbon-tabs span { padding: 6px 16px 0; white-space: nowrap; border-bottom: 3px solid transparent; font-size: 13.6px; }
.ribbon-tabs .active { width: 73px; padding: 6px 0 0; margin-right: -3px; text-align: center; color: #0a95da; font-size: 13.33px; font-weight: bold; border-color: #0a95da; }
.groups { display: flex; }
.group { height: 66px; position: relative; display: flex; flex-direction: column; align-items: center; }
.group:not(.select)::after { content: ""; position: absolute; right: 0; top: 4px; width: 1px; height: 64px; background: #c8c8c8; }
.icons { display: flex; height: 44px; margin-top: 2px; }
.icons svg { width: 54px; height: 44px; overflow: visible; }
.label { margin-top: 7px; line-height: 16px; white-space: nowrap; font-size: 13.5px; }
.automate .label, .modify .label, .assemble .label, .configure .label, .insert .label { margin-left: -3px; }
.create { width: 340px; }
.automate { width: 124px; }
.modify { width: 336px; }
.assemble { width: 175px; }
.configure, .construct { width: 130px; }
.inspect { width: 105px; }
.insert { width: 175px; }
.select { width: 100px; }
.construct .label, .select .label { margin-left: 3px; }

.viewport { position: relative; flex: none; height: 784px; background: #fff; overflow: hidden; }
.scene { width: 1919px; height: 784px; }
.cube-face { font: bold 46px Roboto, sans-serif; fill: #8a8f96; }
.axis-x, .axis-y { font: 42px Roboto, sans-serif; fill: #ff7474; stroke: #ff7474; }
.axis-y { fill: #73ee73; stroke: #73ee73; }

.panel-head { width: 374px; height: 31px; display: flex; align-items: center; background: #f0f0f0; border: 1px solid #c8c8c8; border-bottom-width: 2px; color: #666; font-size: 13.6px; }
.head-dot { margin-left: auto; margin-right: 12px; }
.browser { position: absolute; left: 5px; top: 6px; }
.comments { position: absolute; left: 5px; top: 747px; padding-left: 30px; border-top: 0; }
.tree { list-style: none; margin: 4px 0 0; padding: 0; }
.tree li { height: 30px; display: flex; align-items: center; }
.root { padding-left: 22px; }
.l1 { padding-left: 45px; }
.l2 { padding-left: 90px; }
.twisty { width: 10px; height: 20px; margin-right: 13px; }
.pill { height: 25px; display: flex; align-items: center; padding-right: 14px; background: rgba(240, 240, 240, .95); white-space: nowrap; font-size: 13.6px; }
.root .pill { width: 324px; padding: 0; }
.i-eye { width: 31px; height: 20px; }
.i-folder { width: 41px; height: 20px; }
.i-body { width: 42px; height: 20px; }
.chosen { display: flex; align-items: center; width: 262px; height: 20px; background: #999; color: #fff; }
.chosen b { margin-left: 10px; }
.radio { margin-left: 5px; }

.navbar { position: absolute; left: 813px; top: 746px; width: 296px; height: 30px; display: flex; background: #f0f0f0; }
.assistant { position: absolute; right: 14px; top: 754px; }

.timeline { flex: none; height: 62px; display: flex; align-items: center; padding-left: 5px; border-top: 1px solid #c8c8c8; background: #f1f1f1; }
.settings { margin-left: auto; margin-right: 14px; margin-bottom: 2px; }
.taskbar-edge { height: 5px; background: #1e1c24; }
```
